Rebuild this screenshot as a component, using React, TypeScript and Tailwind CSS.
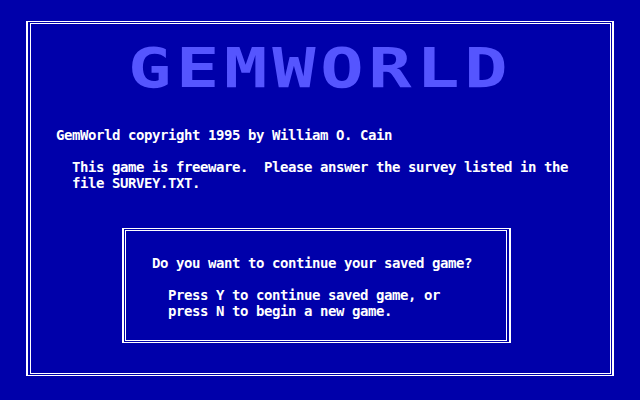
import React from "react";

const App: React.FC = () => {
  return (
    <div className="w-[640px] h-[400px] overflow-hidden bg-[#0000AA] pt-[21px] pl-[26px] font-['DejaVu_Sans_Mono',monospace] font-bold text-white text-[14px] leading-4 tracking-[-0.43px]">
      <div className="w-[588px] h-[355px] border-y border-x-2 border-white py-px pl-[2px] pr-px">
        <div className="h-full border border-white pt-[23px]">
          {/* logo */}
          <div className="ml-[97px] h-[40px] w-[376px] overflow-visible">
            <div className="text-[72px] leading-[72px] tracking-[4.7px] text-[#5555FF] origin-top scale-y-[0.76] -translate-y-[6px] whitespace-nowrap">
              GEMWORLD
            </div>
          </div>

          <div className="mt-[40px] ml-[25px] whitespace-pre">
            <p>GemWorld copyright 1995 by William O. Cain</p>
            <p className="mt-4 ml-4">
              This game is freeware.  Please answer the survey listed in the
            </p>
            <p className="ml-4">file SURVEY.TXT.</p>
          </div>

          {/* continue dialog */}
          <div className="mt-[37px] ml-[91px] w-[389px] h-[115px] border-y border-x-2 border-white py-px pl-px pr-[2px]">
            <div className="h-full border border-white pt-[24px] pl-[26px] whitespace-pre">
              <p>Do you want to continue your saved game?</p>
              <div className="mt-4 ml-4">
                <p>Press Y to continue saved game, or</p>
                <p>press N to begin a new game.</p>
              </div>
            </div>
          </div>
        </div>
      </div>
    </div>
  );
};

export default App;
